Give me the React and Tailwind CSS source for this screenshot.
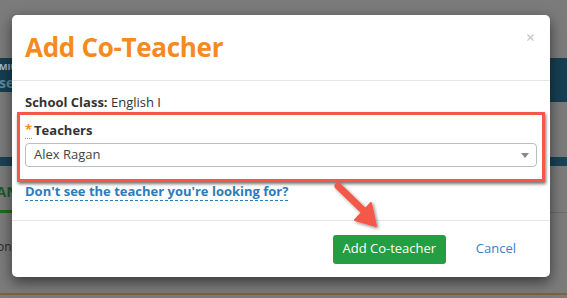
import { X } from 'lucide-react';

function Backdrop() {
  return (
    <div className="absolute inset-0 bg-[#7b7b7b] flex flex-col">
      {/* page bits peeking out behind the overlay */}
      <div className="h-[58px] shrink-0" />
      <div className="h-[34px] shrink-0 bg-[#163f52] font-bold -ml-[1px]">
        <div className="text-[9px] leading-[10px] text-[#a9bcc6] pt-[4px]">MIU</div>
        <div className="text-[14px] leading-[16px] text-[#5b8aa1] mt-[3px]">ses</div>
      </div>
      <div className="h-[10px] shrink-0 flex">
        <div className="flex-1" />
        <div className="w-[20px] bg-[#163f52]" />
      </div>
      <div className="h-[55px] shrink-0" />
      <div className="h-[9px] shrink-0 bg-[#1a4255]" />
      <div className="text-[15px] font-bold text-[#1f5e1f] leading-[18px] mt-[16px] -ml-[4px]">AN</div>
      <div className="h-[3px] w-[12px] bg-[#1d6b1d] mt-[10px]" />
      <div className="text-[12px] text-[#2c2c2c] leading-[14px] mt-[27px] -ml-[3px]">onn</div>
      <div className="absolute right-0 w-[20px] top-[212px] h-px bg-[#6a6a6a]" />
      <div className="absolute left-0 right-0 top-[293px] h-[2px] bg-[#7d5f45]" />
    </div>
  );
}

function Arrow() {
  return (
    <svg className="absolute left-[326px] top-[176px]" width="60" height="58" viewBox="0 0 60 58">
      <defs>
        <filter id="sh" x="-30%" y="-30%" width="160%" height="160%">
          <feDropShadow dx="1.5" dy="1.5" stdDeviation="1.5" floodColor="#000" floodOpacity="0.45" />
        </filter>
      </defs>
      <g filter="url(#sh)" fill="#f4584a" stroke="#f4584a" strokeLinejoin="round">
        <line x1="12" y1="10" x2="40" y2="37" strokeWidth="7" strokeLinecap="round" />
        <path d="M29 44 L50 50 L45 27 Z" strokeWidth="2" />
      </g>
    </svg>
  );
}

export default function App() {
  return (
    <div
      className="relative w-[567px] h-[298px] overflow-hidden"
      style={{ fontFamily: '"Open Sans", "Liberation Sans", sans-serif' }}
    >
      <Backdrop />

      <div className="absolute left-[12px] top-[15px] w-[538px] h-[262px] bg-white rounded-[5px] shadow-[0_5px_14px_rgba(0,0,0,0.55)] flex flex-col">
        {/* Header */}
        <div className="h-[66px] shrink-0 border-b border-[#e5e5e5] flex items-center justify-between pl-[13px] pr-[14px]">
          <h2 className="text-[26px] font-bold text-[#f58a1f] leading-none tracking-[-0.3px] -mt-[1px]">
            Add Co-Teacher
          </h2>
          <X className="w-[11px] h-[11px] text-[#c4c4c4] -mt-[21px]" strokeWidth={2.5} />
        </div>

        {/* Body */}
        <div className="flex-1 px-[13px] pt-[13px]">
          <div className="text-[13px] leading-[16px] text-[#333]">
            <span className="font-bold">School Class:</span> English I
          </div>

          <div className="mt-[2px] -mx-[8px] border-[3px] border-[#f4584a] shadow-[1px_2px_3px_rgba(0,0,0,0.55)] px-[5px] pt-[7px] pb-[12px]">
            <div className="text-[13px] leading-[16px] font-bold text-[#333] flex items-start">
              <span className="text-[#f58a1f] mr-[2px] border-b border-dotted border-[#f58a1f] leading-[14px] h-[17px]">*</span>
              <span>Teachers</span>
            </div>
            <div className="mt-[4px] h-[24px] border border-[#bdbdbd] rounded-[4px] flex items-center justify-between pl-[8px] pr-[7px]">
              <span className="text-[13px] text-[#444]">Alex Ragan</span>
              <span className="w-0 h-0 border-l-[4px] border-r-[4px] border-t-[5px] border-l-transparent border-r-transparent border-t-[#888]" />
            </div>
          </div>

          <div className="mt-[1px] text-[13px] leading-[16px]">
            <span className="font-bold text-[#2e7bb9] border-b border-dashed border-[#2e7bb9]">
              Don't see the teacher you're looking for?
            </span>
          </div>
        </div>

        {/* Footer */}
        <div className="h-[57px] shrink-0 border-t border-[#e5e5e5] flex items-center justify-end pr-[34px] gap-[30px]">
          <button className="h-[29px] w-[113px] rounded-[3px] bg-[#239e42] text-white text-[13px]">
            Add Co-teacher
          </button>
          <button className="text-[13px] text-[#3d7fc0]">Cancel</button>
        </div>
      </div>

      <Arrow />
    </div>
  );
}
